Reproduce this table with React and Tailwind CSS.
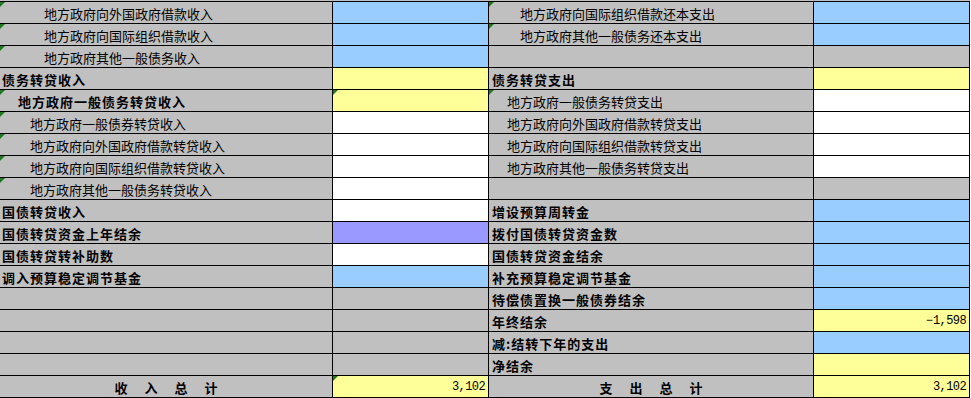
const GRAY = "bg-[#c0c0c0]";
const BG = {
  gray: "bg-[#c0c0c0]",
  blue: "bg-[#99ccff]",
  yellow: "bg-[#ffff99]",
  purple: "bg-[#9999ff]",
  white: "bg-white",
};

// [label, indent, bold, bg, value, labelTri, valueTri]
const leftRows = [
  ["地方政府向外国政府借款收入", 44, false, "blue", "", true, false],
  ["地方政府向国际组织借款收入", 44, false, "blue", "", true, false],
  ["地方政府其他一般债务收入", 44, false, "blue", "", true, false],
  ["债务转贷收入", 2, true, "yellow", "", false, false],
  ["地方政府一般债务转贷收入", 18, true, "yellow", "", true, true],
  ["地方政府一般债券转贷收入", 30, false, "white", "", true, false],
  ["地方政府向外国政府借款转贷收入", 30, false, "white", "", true, false],
  ["地方政府向国际组织借款转贷收入", 30, false, "white", "", true, false],
  ["地方政府其他一般债务转贷收入", 30, false, "white", "", true, false],
  ["国债转贷收入", 2, true, "white", "", false, false],
  ["国债转贷资金上年结余", 2, true, "purple", "", false, false],
  ["国债转贷转补助数", 2, true, "white", "", false, false],
  ["调入预算稳定调节基金", 2, true, "blue", "", false, false],
  ["", 0, false, "gray", "", false, false],
  ["", 0, false, "gray", "", false, false],
  ["", 0, false, "gray", "", false, false],
  ["", 0, false, "gray", "", false, false],
];

const rightRows = [
  ["地方政府向国际组织借款还本支出", 31, false, "blue", "", true],
  ["地方政府其他一般债务还本支出", 31, false, "blue", "", true],
  ["", 0, false, "gray", "", false],
  ["债务转贷支出", 3, true, "yellow", "", false],
  ["地方政府一般债务转贷支出", 18, false, "white", "", true],
  ["地方政府向外国政府借款转贷支出", 18, false, "white", "", false],
  ["地方政府向国际组织借款转贷支出", 18, false, "white", "", false],
  ["地方政府其他一般债务转贷支出", 18, false, "white", "", false],
  ["", 0, false, "gray", "", false],
  ["增设预算周转金", 3, true, "blue", "", false],
  ["拨付国债转贷资金数", 3, true, "blue", "", false],
  ["国债转贷资金结余", 3, true, "blue", "", false],
  ["补充预算稳定调节基金", 3, true, "blue", "", false],
  ["待偿债置换一般债券结余", 3, true, "blue", "", false],
  ["年终结余", 3, true, "yellow", "-1,598", false],
  ["减:结转下年的支出", 3, true, "blue", "", false],
  ["净结余", 3, true, "yellow", "", false],
];

const Tri = () => (
  <span className="absolute top-0 left-0 w-0 h-0 border-t-[5px] border-r-[5px] border-t-[#1f7a1f] border-r-transparent" />
);

const Label = ({ text, indent, bold, tri, width }) => (
  <div
    className={`relative flex items-center h-full border-r border-black ${GRAY} ${width}`}
  >
    {tri && <Tri />}
    <span
      className={`pt-px whitespace-nowrap text-[13px] ${bold ? "font-bold tracking-[1px]" : ""}`}
      style={{ paddingLeft: indent }}
    >
      {text}
    </span>
  </div>
);

const Value = ({ bg, value, tri }) => (
  <div
    className={`relative flex items-center justify-end h-full w-[156px] border-r border-black pr-[3px] ${BG[bg]}`}
  >
    {tri && <Tri />}
    {value && (
      <span className="pt-px font-['Liberation_Mono',monospace] text-[12px] tracking-[-0.6px]">
        {value.startsWith("-") ? (
          <>
            <span className="tracking-[0px]">−</span>
            {value.slice(1)}
          </>
        ) : (
          value
        )}
      </span>
    )}
  </div>
);

const Total = ({ chars, width }) => (
  <div
    className={`flex items-center justify-center gap-[17px] h-full border-r border-black ${GRAY} ${width}`}
  >
    {chars.map((c, i) => (
      <span key={i} className="pt-px text-[13px] font-bold">
        {c}
      </span>
    ))}
  </div>
);

export default function App() {
  return (
    <div className="w-[971px] h-[398px] overflow-hidden bg-white font-['Noto_Sans_CJK_SC','Noto_Sans',sans-serif] text-black leading-none">
      <div className={`h-px w-[970px] ${GRAY}`} />
      <div className="w-[970px] border-t border-black">
        {leftRows.map((l, i) => {
          const r = rightRows[i];
          return (
            <div key={i} className="flex h-[22px] border-b border-black">
              <Label text={l[0]} indent={l[1]} bold={l[2]} tri={l[5]} width="w-[333px]" />
              <Value bg={l[3]} value={l[4]} tri={l[6]} />
              <Label text={r[0]} indent={r[1]} bold={r[2]} tri={r[5]} width="w-[325px]" />
              <Value bg={r[3]} value={r[4]} />
            </div>
          );
        })}
        <div className="flex h-[22px] border-b border-black">
          <Total chars={["收", "入", "总", "计"]} width="w-[333px]" />
          <Value bg="yellow" value="3,102" tri />
          <Total chars={["支", "出", "总", "计"]} width="w-[325px]" />
          <Value bg="yellow" value="3,102" />
        </div>
      </div>
    </div>
  );
}
